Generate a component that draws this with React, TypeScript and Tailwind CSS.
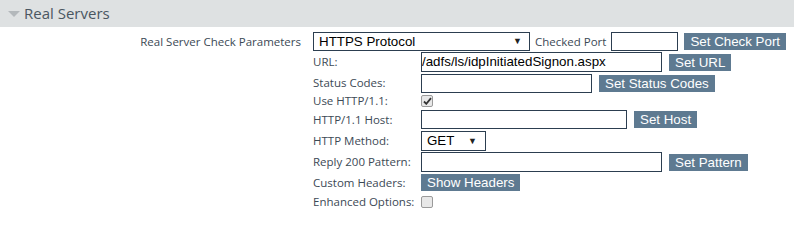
import React from 'react';

const label = "text-[11.5px] text-[#3c4955] [font-family:'Open_Sans',sans-serif] whitespace-nowrap";
const field = "h-[19px] border border-[#2c3e50] bg-white text-[13.33px] text-black [font-family:'Liberation_Sans',Arial,sans-serif]";
const btn = "h-[17px] bg-[#5e7a91] text-white text-[13.33px] leading-[17px] px-[6px] [font-family:'Liberation_Sans',Arial,sans-serif] whitespace-nowrap";

const Check: React.FC<{ checked?: boolean }> = ({ checked }) => (
  <span className="w-[12px] h-[12px] rounded-[2px] border border-[#9a9a9a] bg-[#e8e8e8] flex items-center justify-center">
    {checked && (
      <svg width="9" height="8" viewBox="0 0 9 8">
        <path d="M1 4.5 L3.3 6.8 L8 1.2" stroke="#333" strokeWidth="1.8" fill="none" />
      </svg>
    )}
  </span>
);

const Arrow = () => <span className="text-[9px] text-[#222] leading-none">▼</span>;

const rows: { label: string; h: string; content: React.ReactNode }[] = [
  {
    label: 'URL:',
    h: 'h-[20px]',
    content: (
      <>
        <div className={`${field} w-[241px] h-[20px] leading-[18px] pl-0 overflow-hidden`}>/adfs/ls/idpInitiatedSignon.aspx</div>
        <span className={`${btn} ml-[7px]`}>Set URL</span>
      </>
    ),
  },
  {
    label: 'Status Codes:',
    h: 'h-[22px]',
    content: (
      <>
        <div className={`${field} w-[171px]`} />
        <span className={`${btn} ml-[7px]`}>Set Status Codes</span>
      </>
    ),
  },
  { label: 'Use HTTP/1.1:', h: 'h-[14px]', content: <Check checked /> },
  {
    label: 'HTTP/1.1 Host:',
    h: 'h-[23px]',
    content: (
      <>
        <div className={`${field} w-[206px]`} />
        <span className={`${btn} ml-[7px]`}>Set Host</span>
      </>
    ),
  },
  {
    label: 'HTTP Method:',
    h: 'h-[20px]',
    content: (
      <div className={`${field} w-[65px] h-[20px] flex items-center justify-between pl-[5px] pr-[8px]`}>
        <span>GET</span>
        <Arrow />
      </div>
    ),
  },
  {
    label: 'Reply 200 Pattern:',
    h: 'h-[22px]',
    content: (
      <>
        <div className={`${field} w-[241px] h-[20px]`} />
        <span className={`${btn} ml-[7px]`}>Set Pattern</span>
      </>
    ),
  },
  {
    label: 'Custom Headers:',
    h: 'h-[19px]',
    content: <span className={btn}>Show Headers</span>,
  },
  { label: 'Enhanced Options:', h: 'h-[20px]', content: <Check /> },
];

export default function App() {
  return (
    <div className="w-[794px] h-[210px] bg-white overflow-hidden">
      <div className="h-[27px] bg-[#dee1e2] flex items-center pl-[8px]">
        <svg width="12" height="6" viewBox="0 0 12 6" className="mt-[1px]">
          <path d="M0 0 L12 0 L6 6 Z" fill="#b3b8bb" />
        </svg>
        <span className="ml-[4px] text-[15px] text-[#4a5661] [font-family:'Open_Sans',sans-serif]">Real Servers</span>
      </div>
      <div className="flex pt-[4px]">
        <div className="w-[301px] flex justify-end h-[21px] items-center">
          <span className={label}>Real Server Check Parameters</span>
        </div>
        <div className="ml-[12px] flex flex-col">
          <div className="flex items-center h-[21px]">
            <div className={`${field} w-[217px] flex items-center justify-between pl-[5px] pr-[7px]`}>
              <span>HTTPS Protocol</span>
              <Arrow />
            </div>
            <span className={`${label} ml-[5px]`}>Checked Port</span>
            <div className={`${field} w-[67px] ml-[5px]`} />
            <span className={`${btn} ml-[6px]`}>Set Check Port</span>
          </div>
          {rows.map((r) => (
            <div key={r.label} className={`flex items-center ${r.h}`}>
              <span className={`${label} w-[108px]`}>{r.label}</span>
              {r.content}
            </div>
          ))}
        </div>
      </div>
    </div>
  );
}
